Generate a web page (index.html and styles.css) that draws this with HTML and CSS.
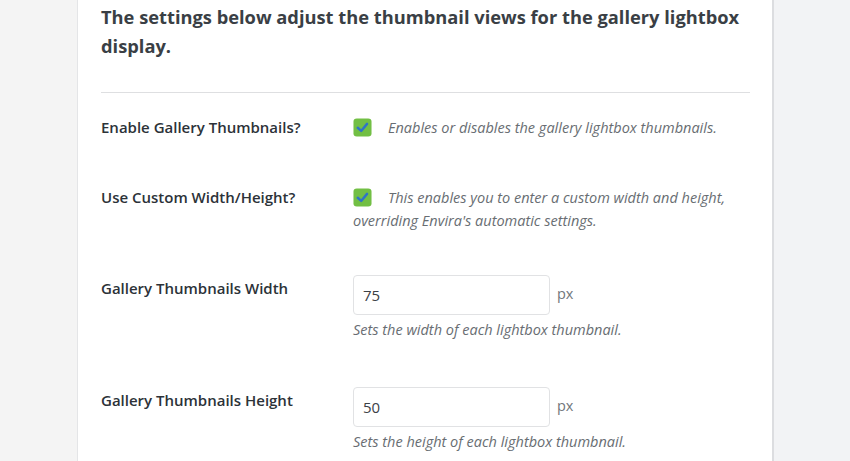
FILE: index.html
```html
<!DOCTYPE html>
<html>
<head>
<meta charset="utf-8">
<link rel="stylesheet" href="styles.css">
</head>
<body>
<div class="page">
  <div class="gutter"></div>
  <main class="panel">
    <h2 class="intro">The settings below adjust the thumbnail views for the gallery lightbox display.</h2>
    <hr class="divider">
    <div class="row row-check">
      <div class="label">Enable Gallery Thumbnails?</div>
      <div class="field">
        <p class="desc"><span class="check"><svg viewBox="0 0 20 20" width="19" height="19"><rect x="0.5" y="0.5" width="19" height="19" rx="3.5" fill="#72bf44"/><path d="M5 10.3 L8.6 13.6 L14.8 6.2" fill="none" stroke="#2f74c6" stroke-width="2.6" stroke-linecap="round" stroke-linejoin="round"/></svg></span>Enables or disables the gallery lightbox thumbnails.</p>
      </div>
    </div>
    <div class="row row-check row-check2">
      <div class="label">Use Custom Width/Height?</div>
      <div class="field">
        <p class="desc"><span class="check"><svg viewBox="0 0 20 20" width="19" height="19"><rect x="0.5" y="0.5" width="19" height="19" rx="3.5" fill="#72bf44"/><path d="M5 10.3 L8.6 13.6 L14.8 6.2" fill="none" stroke="#2f74c6" stroke-width="2.6" stroke-linecap="round" stroke-linejoin="round"/></svg></span>This enables you to enter a custom width and height, overriding Envira's automatic settings.</p>
      </div>
    </div>
    <div class="row row-input">
      <div class="label label-input">Gallery Thumbnails Width</div>
      <div class="field">
        <div class="input-line"><input class="num" type="text" value="75"><span class="unit">px</span></div>
        <p class="desc desc-under">Sets the width of each lightbox thumbnail.</p>
      </div>
    </div>
    <div class="row row-input">
      <div class="label label-input">Gallery Thumbnails Height</div>
      <div class="field">
        <div class="input-line"><input class="num" type="text" value="50"><span class="unit">px</span></div>
        <p class="desc desc-under">Sets the height of each lightbox thumbnail.</p>
      </div>
    </div>
  </main>
  <div class="aside"></div>
</div>
</body>
</html>
```

FILE: styles.css
```css
html, body {
  margin: 0;
  padding: 0;
  height: 100%;
}
body {
  font-family: "Open Sans", "Noto Sans", sans-serif;
  color: #32373c;
  background: #f3f4f6;
}
.page {
  display: flex;
  height: 461px;
  overflow: hidden;
}
.gutter {
  width: 77px;
  flex: none;
  background: #f4f4f4;
}
.panel {
  flex: none;
  width: 697px;
  box-sizing: border-box;
  background: #ffffff;
  border-left: 1px solid #e4e5e7;
  border-right: 2px solid #dcdde0;
  padding: 0 22px 0 23px;
}
.aside {
  flex: 1;
  background: #f2f3f5;
}
.intro {
  margin: 0;
  padding-top: 2px;
  font-size: 18.3px;
  line-height: 29px;
  font-weight: 700;
  color: #3a3f45;
}
.divider {
  margin: 32px 0 0;
  border: 0;
  border-top: 1px solid #dedfe1;
  height: 0;
}
.row {
  display: grid;
  grid-template-columns: 252px 1fr;
  padding: 23px 0 24px;
}
.row-input {
  padding: 19px 0 27px;
}
.label {
  font-size: 15px;
  line-height: 23px;
  font-weight: 600;
  color: #2c3238;
}
.label-input {
  padding-top: 2px;
}
.desc {
  margin: 0;
  font-size: 14.5px;
  line-height: 23px;
  font-style: italic;
  color: #686d72;
}
.check {
  display: inline-block;
  width: 19px;
  height: 19px;
  vertical-align: -4px;
  margin-right: 16px;
}
.check svg {
  display: block;
}
.input-line {
  display: flex;
  align-items: center;
  gap: 7px;
}
.num {
  width: 197px;
  height: 40px;
  box-sizing: border-box;
  border: 1px solid #e1e2e4;
  border-radius: 4px;
  padding: 0 9px;
  margin: 0;
  font-family: "Open Sans", "Noto Sans", sans-serif;
  font-size: 15px;
  color: #3c4146;
  background: #fff;
  outline: none;
}
.unit {
  font-size: 14.5px;
  color: #72777c;
  margin-top: -3px;
}
.desc-under {
  margin-top: 3px;
}
```
